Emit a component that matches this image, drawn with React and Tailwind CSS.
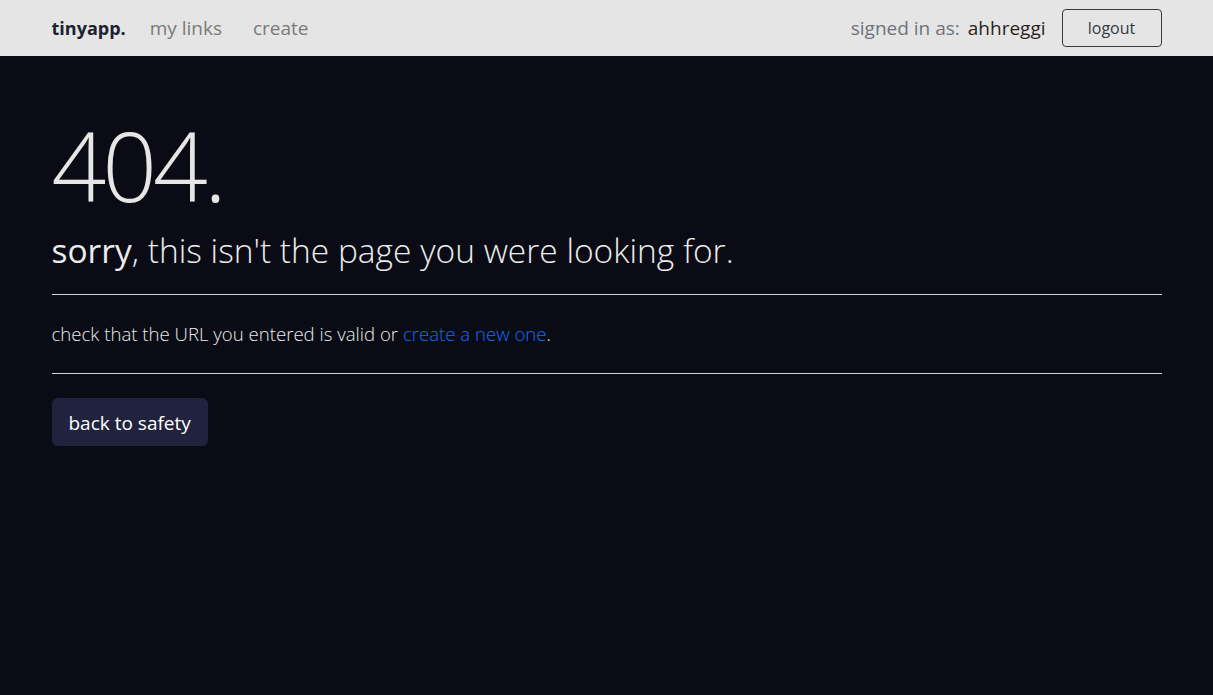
export default function App() {
  return (
    <div className="min-h-[695px] bg-[#0a0b14] font-['Open_Sans',sans-serif]">
      {/* Navbar */}
      <nav className="h-14 bg-[#e5e5e5]">
        <div className="mx-auto flex h-full w-[1110px] items-center">
          <a href="#" className="text-[18px] font-bold text-[#1e2130]">
            tinyapp.
          </a>
          <a href="#" className="ml-[24px] text-[19px] text-[#7a7a7a]">
            my links
          </a>
          <a href="#" className="ml-[31px] text-[19px] text-[#7a7a7a]">
            create
          </a>
          <div className="ml-auto flex items-center">
            <span className="text-[19px] text-[#6f737a]">signed in as:</span>
            <span className="ml-2 text-[19px] text-[#2a1f1f]">ahhreggi</span>
            <button className="ml-4 h-[38px] w-[100px] rounded border border-[#343a40] text-[16px] text-[#343a40]">
              logout
            </button>
          </div>
        </div>
      </nav>

      {/* Content */}
      <main className="mx-auto w-[1110px] pt-[51px]">
        <h1 className="text-[96px] font-light leading-[1.2] tracking-[-4px] text-[#e6e6e6]">404.</h1>
        <h2 className="mt-2 text-[33.5px] font-light leading-[1.2] text-[#ececec]">
          <span className="font-medium">sorry</span>, this isn't the page you were looking for.
        </h2>
        <hr className="mt-[24px] border-0 border-t border-[#d4d4d4]" />
        <p className="my-6 text-[18.6px] font-light leading-[30px] text-[#ececec]">
          check that the URL you entered is valid or{" "}
          <a href="#" className="text-[#0d6efd]">
            create a new one
          </a>
          .
        </p>
        <hr className="border-0 border-t border-[#d4d4d4]" />
        <button className="mt-6 h-12 rounded-md bg-[#21233e] px-[17px] pt-[2px] text-[19px] text-white">
          back to safety
        </button>
      </main>
    </div>
  );
}
